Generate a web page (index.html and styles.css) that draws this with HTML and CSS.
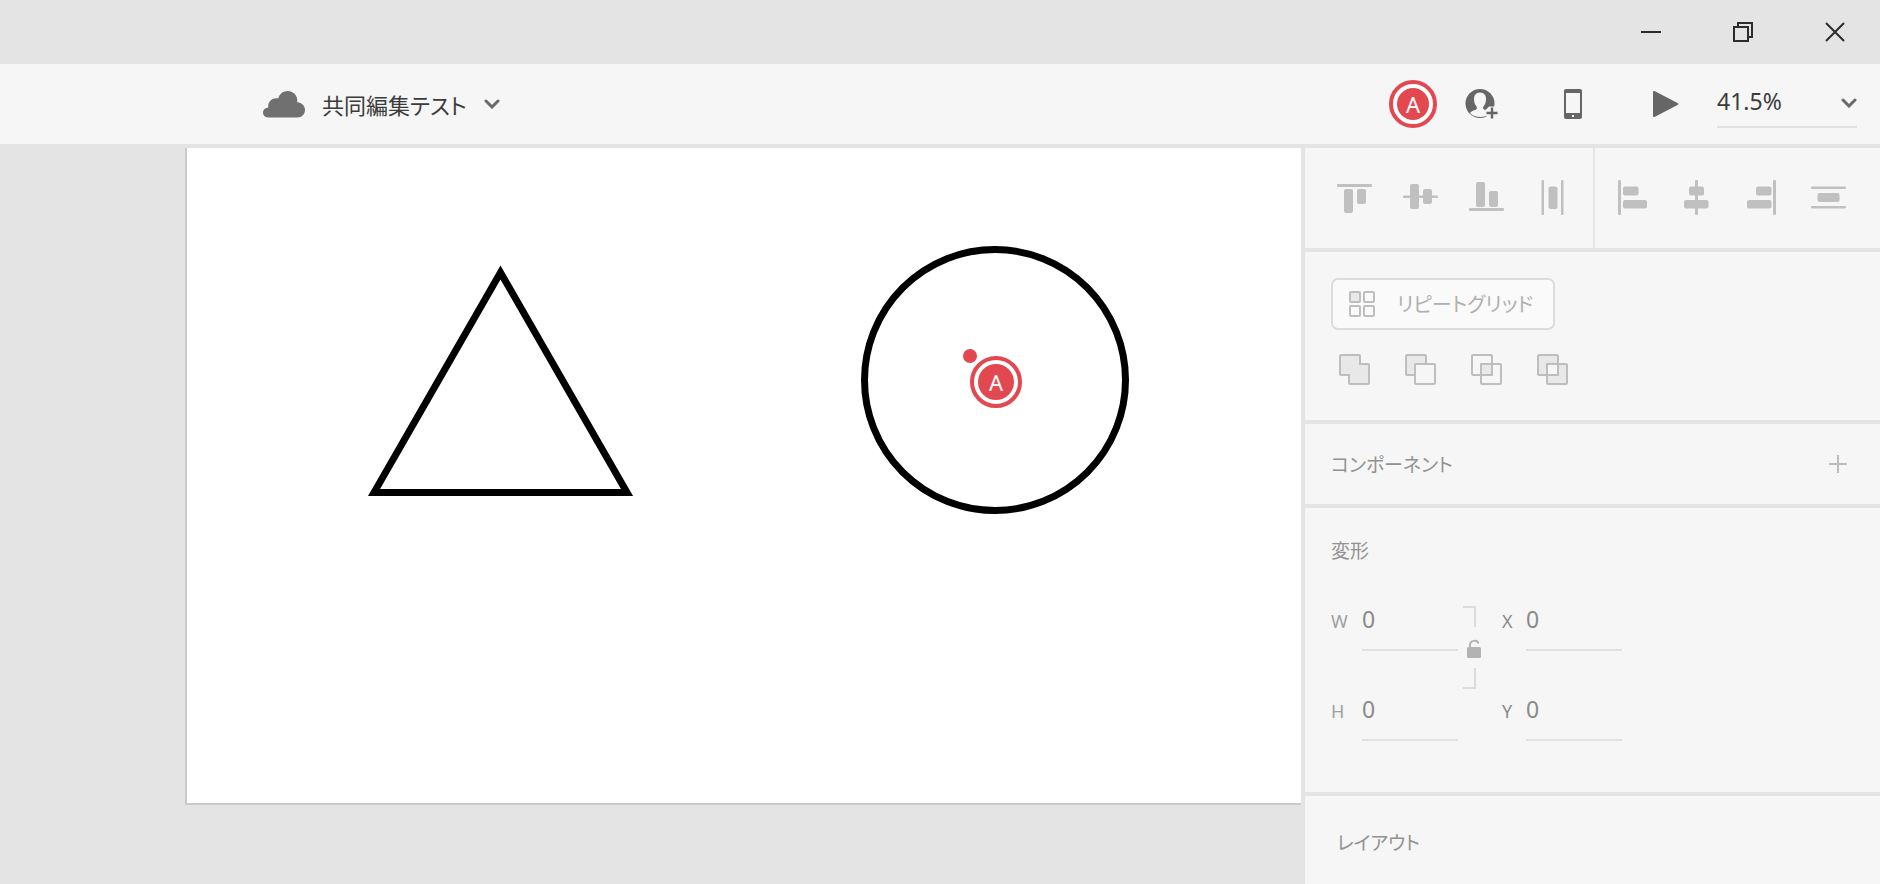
FILE: index.html
```html
<!DOCTYPE html>
<html lang="ja">
<head>
    <meta charset="UTF-8">
    <meta name="viewport" content="width=device-width, initial-scale=1.0">
    <title>共同編集テスト</title>
    <link rel="stylesheet" href="styles.css">
</head>
<body>
    <div class="titlebar">
        <button aria-label="最小化">
            <svg width="20" height="20" viewBox="0 0 20 20"><path d="M0 10h20"/></svg>
        </button>
        <button aria-label="元に戻す">
            <svg width="20" height="20" viewBox="0 0 20 20"><path d="M1 5h14v14H1zM5 5V1h14v14h-4"/></svg>
        </button>
        <button aria-label="閉じる">
            <svg width="20" height="20" viewBox="0 0 20 20"><path d="M1 1l18 18M19 1L1 19"/></svg>
        </button>
    </div>

    <header class="toolbar">
        <button class="documento">
            <svg width="42" height="28" viewBox="0 0 42 28"><path fill="#707070" d="M5 27.500C2 27.500 0 25.500 0 22.600C0 19.800 2.300 17.500 5.300 17.400C4.500 11.500 9.500 7 15.300 8.400C16.500 3.700 20.300 1 24.800 1C30.800 1 35 6 34.200 12.200C38.800 12.600 42 15.800 42 20C42 24.300 38.700 27.500 34.500 27.500Z"/></svg>
            <span>共同編集テスト</span>
            <svg class="flecha" width="16" height="10" viewBox="0 0 16 10"><path d="M2 2l6 6 6-6"/></svg>
        </button>

        <div class="acciones">
            <div class="avatar"><span>A</span></div>
            <button class="invitar" aria-label="招待">
                <svg width="34" height="32" viewBox="0 0 34 32">
                    <circle cx="15" cy="15.500" r="14.500" fill="#666"/>
                    <path fill="#f6f6f6" d="M15 4.500C11 4.500 9 7.300 9 11.200C9 14.500 10.200 17 11.700 18.700C12.300 20.300 11.800 21.300 10 22C7.800 22.800 6 23.600 5 25C8 28 11.500 29 15.500 29C19 29 22 28 25 25.500V20L20.300 22C18.200 21.300 17.700 20.300 18.300 18.700C19.900 17 21 14.500 21 11.200C21 7.300 19 4.500 15 4.500Z"/>
                    <path d="M20.500 22L24 18.500H32V31H22Z" fill="#f6f6f6"/>
                    <path d="M21.500 25h11M27 19.500v11" stroke="#666" stroke-width="2.400"/>
                </svg>
            </button>
            <button class="movil" aria-label="モバイルプレビュー">
                <svg width="18" height="30" viewBox="0 0 18 30"><path fill="#666" fill-rule="evenodd" d="M2 0h14a2 2 0 0 1 2 2v26a2 2 0 0 1-2 2H2a2 2 0 0 1-2-2V2a2 2 0 0 1 2-2zM2 4v20h14V4zM8 26v2h2v-2z"/></svg>
            </button>
            <button class="play" aria-label="プレビュー">
                <svg width="26" height="26" viewBox="0 0 26 26"><path fill="#666" d="M1.500 0L24.500 12Q26 13 24.500 14L1.500 26Q0 26.200 0 25V1Q0-.2 1.500 0z"/></svg>
            </button>
            <div class="zoom">
                <select aria-label="ズーム">
                    <option>41.5%</option>
                    <option>100%</option>
                </select>
                <svg class="flecha" width="16" height="10" viewBox="0 0 16 10"><path d="M2 2l6 6 6-6"/></svg>
            </div>
        </div>
    </header>

    <div class="espacio">
        <main class="lienzo">
            <div class="artboard">
                <svg class="triangulo" width="266" height="232" viewBox="0 0 266 232"><path d="M132.500 7.500L6 227.500h253z"/></svg>
                <svg class="circulo" width="268" height="268" viewBox="0 0 268 268"><circle cx="134" cy="134" r="130.500"/></svg>
                <div class="punto"></div>
                <div class="avatar cursor"><span>A</span></div>
            </div>
        </main>

        <aside class="panel">
            <section class="alinear">
                <div class="grupo">
                    <button aria-label="上揃え"><svg width="36" height="36" viewBox="0 0 36 36"><rect y="4" width="35" height="3" rx="1"/><rect x="7" y="9" width="9" height="24" rx="2"/><rect x="20" y="9" width="9" height="15" rx="2"/></svg></button>
                    <button aria-label="中央揃え (垂直方向)"><svg width="36" height="36" viewBox="0 0 36 36"><rect y="15.500" width="35" height="2.500" rx="1"/><rect x="7" y="4" width="9" height="25" rx="2"/><rect x="20" y="9" width="9" height="15" rx="2"/></svg></button>
                    <button aria-label="下揃え"><svg width="36" height="36" viewBox="0 0 36 36"><rect y="28" width="35" height="3" rx="1"/><rect x="7" y="2" width="9" height="25" rx="2"/><rect x="20" y="11" width="9" height="16" rx="2"/></svg></button>
                    <button aria-label="水平方向に分布"><svg width="36" height="36" viewBox="0 0 36 36"><rect x="6.500" width="2.500" height="35" rx="1"/><rect x="26" width="2.500" height="35" rx="1"/><rect x="13.500" y="6.500" width="9" height="22.500" rx="2"/></svg></button>
                </div>
                <div class="grupo">
                    <button aria-label="左揃え"><svg width="36" height="36" viewBox="0 0 36 36"><rect x="5" width="3" height="35" rx="1"/><rect x="10" y="6.500" width="15.500" height="9" rx="2"/><rect x="10" y="20" width="24" height="8.500" rx="2"/></svg></button>
                    <button aria-label="中央揃え (水平方向)"><svg width="36" height="36" viewBox="0 0 36 36"><rect x="16" width="3" height="35" rx="1"/><rect x="10" y="6.500" width="15" height="9" rx="2"/><rect x="5" y="20" width="24.500" height="8.500" rx="2"/></svg></button>
                    <button aria-label="右揃え"><svg width="36" height="36" viewBox="0 0 36 36"><rect x="28" width="3" height="35" rx="1"/><rect x="11" y="6.500" width="15.500" height="9" rx="2"/><rect x="2" y="20" width="24.500" height="8.500" rx="2"/></svg></button>
                    <button aria-label="垂直方向に分布"><svg width="36" height="36" viewBox="0 0 36 36"><rect y="6.500" width="35" height="2.500" rx="1"/><rect y="26" width="35" height="2.500" rx="1"/><rect x="6.500" y="13" width="22" height="9" rx="2"/></svg></button>
                </div>
            </section>

            <section class="repetir">
                <button class="boton-repetir">
                    <svg width="26" height="26" viewBox="0 0 26 26"><rect class="lleno" x="1" y="1" width="10" height="10" rx="1"/><rect x="15" y="1" width="10" height="10" rx="1"/><rect x="1" y="15" width="10" height="10" rx="1"/><rect x="15" y="15" width="10" height="10" rx="1"/></svg>
                    <span>リピートグリッド</span>
                </button>
                <div class="booleanos">
                    <button aria-label="合体"><svg width="32" height="32" viewBox="0 0 32 32"><path class="lleno" d="M2 1h18q1 0 1 1v8h8q1 0 1 1v18q0 1-1 1H11q-1 0-1-1v-8H2q-1 0-1-1V2q0-1 1-1z"/></svg></button>
                    <button aria-label="前面オブジェクトで型抜き"><svg width="32" height="32" viewBox="0 0 32 32"><rect class="lleno" x="1" y="1" width="20" height="20" rx="1"/><rect class="vacio" x="10" y="10" width="20" height="20" rx="1"/></svg></button>
                    <button aria-label="交差"><svg width="32" height="32" viewBox="0 0 32 32"><rect x="1" y="1" width="20" height="20" rx="1"/><rect x="10" y="10" width="20" height="20" rx="1"/><path class="lleno" d="M10 10h11v11H10z"/></svg></button>
                    <button aria-label="中マド"><svg width="32" height="32" viewBox="0 0 32 32"><rect class="lleno" x="1" y="1" width="20" height="20" rx="1"/><rect class="lleno" x="10" y="10" width="20" height="20" rx="1"/><path class="vacio" d="M10 10h11v11H10z"/></svg></button>
                </div>
            </section>

            <section class="componente">
                <h2>コンポーネント</h2>
                <button aria-label="コンポーネントを追加">
                    <svg width="18" height="18" viewBox="0 0 18 18"><path d="M0 9h18M9 0v18"/></svg>
                </button>
            </section>

            <section class="transformar">
                <h2>変形</h2>
                <div class="campos">
                    <label for="w">W</label>
                    <input type="text" id="w" value="0">
                    <button class="candado" aria-label="縦横比を固定">
                        <svg width="20" height="84" viewBox="0 0 20 84">
                            <path class="linea" d="M0 1h12v20M12 62v20H0"/>
                            <rect x="4" y="41" width="14" height="11" rx="1.500" fill="#b3b3b3"/>
                            <path class="arco" d="M7 42v-3c0-5 7.500-5.500 8.500-1.500"/>
                        </svg>
                    </button>
                    <label for="x" class="oscuro">X</label>
                    <input type="text" id="x" value="0">
                    <label for="h">H</label>
                    <input type="text" id="h" value="0">
                    <label for="y" class="oscuro">Y</label>
                    <input type="text" id="y" value="0">
                </div>
            </section>

            <section class="diseno">
                <h2>レイアウト</h2>
            </section>
        </aside>
    </div>
</body>
</html>
```
FILE: styles.css
```css
* {
    box-sizing: border-box;
}
body {
    display: flex;
    flex-direction: column;
    min-height: 100vh;
    margin: 0;
    background-color: #e4e4e4;
    font-family: "Noto Sans", "Noto Sans CJK JP", sans-serif;
    color: #3c3c3c;
}
button {
    display: flex;
    align-items: center;
    padding: 0;
    border: none;
    background: none;
    font: inherit;
    color: inherit;
    cursor: pointer;
}
svg {
    display: block;
    flex: none;
    fill: none;
}

/* barra de la ventana */
.titlebar {
    display: flex;
    justify-content: flex-end;
    align-items: center;
    gap: 72px;
    height: 64px;
    padding-right: 35px;
}
.titlebar path {
    stroke: #2c2c2c;
    stroke-width: 2;
}

/* barra superior */
.toolbar {
    display: flex;
    justify-content: space-between;
    align-items: center;
    height: 84px;
    padding: 0 23px 0 263px;
    background-color: #f6f6f6;
    border-bottom: 4px solid #e4e4e4;
}
.documento {
    gap: 17px;
    font-family: "Noto Sans CJK JP", sans-serif;
    font-size: 22px;
    line-height: 32px;
    font-feature-settings: "palt";
}
.flecha path {
    stroke: #6a6a6a;
    stroke-width: 3;
    stroke-linecap: round;
}
.acciones {
    display: flex;
    align-items: center;
}
.avatar {
    display: flex;
    justify-content: center;
    align-items: center;
    width: 48px;
    height: 48px;
    padding: 4px;
    border: 4px solid #e34850;
    border-radius: 50%;
    background-color: white;
    color: white;
    font-size: 22px;
    line-height: 32px;
    text-align: center;
}
.avatar span {
    width: 100%;
    border-radius: 50%;
    background-color: #e34850;
}
.invitar {
    margin-left: 28px;
}
.movil {
    margin-left: 65px;
}
.play {
    margin-left: 71px;
}
.zoom {
    position: relative;
    width: 140px;
    margin-left: 38px;
}
.zoom select {
    appearance: none;
    width: 100%;
    height: 48px;
    padding: 0 0 4px;
    border: none;
    border-bottom: 2px solid #e1e1e1;
    background: none;
    color: #3c3c3c;
    font-family: inherit;
    font-size: 23px;
}
.zoom .flecha {
    position: absolute;
    right: 0;
    top: 18px;
    pointer-events: none;
}

/* lienzo */
.espacio {
    display: flex;
    flex: 1;
}
.lienzo {
    flex: 1;
    padding-left: 185px;
}
.artboard {
    position: relative;
    min-height: 657px;
    background-color: white;
    border-left: 2px solid #cacaca;
    border-bottom: 2px solid #cacaca;
}
.triangulo,
.circulo {
    position: absolute;
    stroke: black;
    stroke-width: 7;
}
.triangulo {
    left: 181px;
    top: 117px;
}
.circulo {
    left: 674px;
    top: 98px;
}
.punto {
    position: absolute;
    left: 776px;
    top: 201px;
    width: 14px;
    height: 14px;
    border-radius: 50%;
    background-color: #e34850;
}
.cursor {
    position: absolute;
    left: 783px;
    top: 208px;
    width: 52px;
    height: 52px;
    line-height: 36px;
}

/* panel de propiedades */
.panel {
    display: flex;
    flex-direction: column;
    width: 579px;
    border-left: 4px solid #e4e4e4;
    background-color: #f6f6f6;
}
.panel section {
    border-bottom: 4px solid #e4e4e4;
}
.panel h2 {
    margin: 0;
    color: #929292;
    font-family: "Noto Sans CJK JP", sans-serif;
    font-size: 19px;
    font-weight: 400;
    line-height: 28px;
    font-feature-settings: "palt";
}
.alinear {
    display: flex;
}
.grupo {
    display: flex;
    gap: 30px;
    padding: 32px 22px 32px 32px;
    fill: #c0c0c0;
}
.grupo svg {
    fill: inherit;
}
.grupo + .grupo {
    padding-left: 18px;
    border-left: 2px solid #e4e4e4;
}
.repetir {
    padding: 26px 26px 34px;
}
.repetir svg {
    stroke: #bebebe;
    stroke-width: 2;
}
.lleno {
    fill: #e8e8e8;
}
.vacio {
    fill: #f6f6f6;
}
.boton-repetir {
    gap: 22px;
    width: 224px;
    height: 52px;
    padding: 0 16px;
    border: 2px solid #dcdcdc;
    border-radius: 7px;
    background-color: #fafafa;
    color: #b0b0b0;
    font-family: "Noto Sans CJK JP", sans-serif;
    font-size: 20px;
    line-height: 28px;
    white-space: nowrap;
    font-feature-settings: "palt";
}
.booleanos {
    display: flex;
    gap: 34px;
    padding: 24px 8px 0;
}
.componente {
    display: flex;
    justify-content: space-between;
    align-items: center;
    height: 84px;
    padding: 0 33px 0 26px;
}
.componente path {
    stroke: #bcbcbc;
    stroke-width: 2;
}
.transformar {
    padding: 28px 26px 51px;
}
.campos {
    display: grid;
    grid-template-columns: 31px 96px 44px 24px 96px;
    grid-template-rows: 60px 60px;
    row-gap: 30px;
    align-items: baseline;
    margin-top: 27px;
}
.campos label {
    color: #a0a0a0;
    font-size: 18px;
}
.campos .oscuro {
    color: #8a8a8a;
}
.campos input {
    width: 100%;
    height: 60px;
    padding: 0 0 2px;
    border: none;
    border-bottom: 2px solid #e1e1e1;
    border-radius: 0;
    background: none;
    color: #8a8a8a;
    font-family: inherit;
    font-size: 23px;
    outline: none;
}
.candado {
    grid-column: 3;
    grid-row: 1 / span 2;
    align-self: start;
    padding: 15px 0 0 5px;
}
.linea {
    stroke: #dcdcdc;
    stroke-width: 2;
}
.arco {
    stroke: #b3b3b3;
    stroke-width: 2;
}
.panel .diseno {
    padding: 32px;
    border-bottom: none;
}
```
